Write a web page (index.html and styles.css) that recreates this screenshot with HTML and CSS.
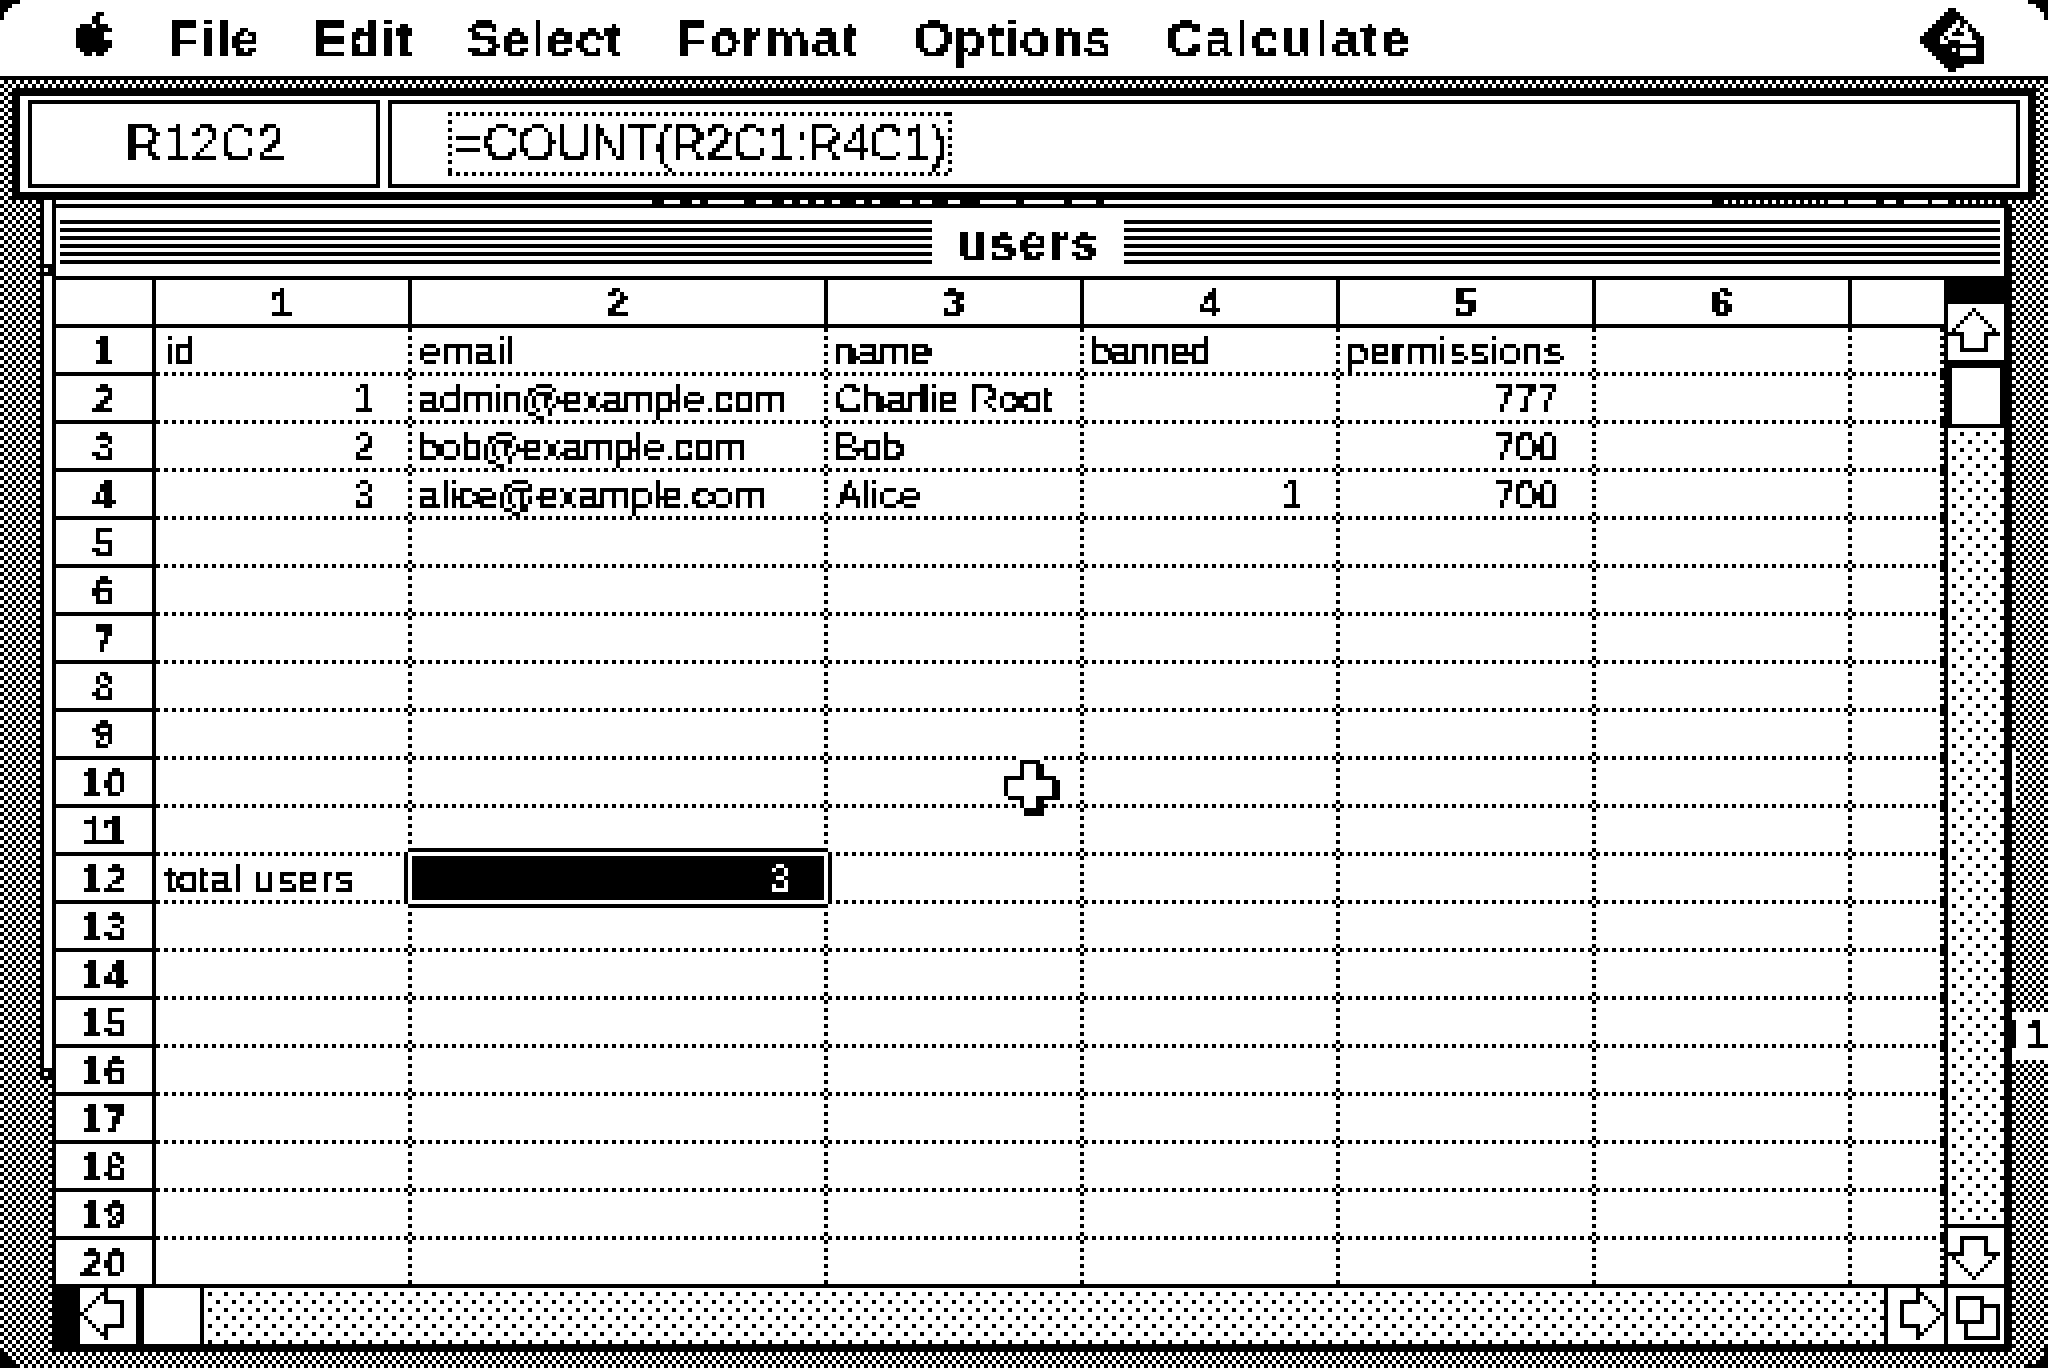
FILE: index.html
```html
<!DOCTYPE html>
<html lang="en">
<head>
<meta charset="utf-8">
<title>users</title>
<link rel="stylesheet" href="styles.css">
</head>
<body>
<svg class="defs" width="0" height="0" aria-hidden="true">
  <filter id="bitmap" x="0" y="0" width="100%" height="100%" color-interpolation-filters="sRGB">
    <feFlood x="1" y="1" width="1" height="1" flood-color="#000"/>
    <feComposite width="4" height="4"/>
    <feTile result="grid"/>
    <feComposite in="SourceGraphic" in2="grid" operator="in"/>
    <feMorphology operator="dilate" radius="1" result="a"/>
    <feOffset in="a" dx="1" dy="0" result="b"/>
    <feOffset in="a" dx="0" dy="1" result="c"/>
    <feOffset in="a" dx="1" dy="1" result="d"/>
    <feMerge result="m">
      <feMergeNode in="a"/><feMergeNode in="b"/><feMergeNode in="c"/><feMergeNode in="d"/>
    </feMerge>
    <feComponentTransfer in="m">
      <feFuncR type="discrete" tableValues="0 0 1"/>
      <feFuncG type="discrete" tableValues="0 0 1"/>
      <feFuncB type="discrete" tableValues="0 0 1"/>
    </feComponentTransfer>
  </filter>
</svg>

<div class="screen">
  <header class="menubar">
    <svg class="apple" viewBox="0 0 9 11" shape-rendering="crispEdges"><path d="M5 0h2v1h-2zM4 1h2v2h-2zM1 3h3v1h-3zM5 3h3v1h-3zM0 4h9v1h-9zM0 5h7v2h-7zM0 7h9v2h-9zM1 9h7v1h-7zM2 10h2v1h-2zM5 10h2v1h-2z"/></svg>
    <nav class="menus">
      <span>File</span><span>Edit</span><span>Select</span><span class="loose">Format</span><span>Options</span><span class="loose">Calculate</span>
    </nav>
    <svg class="appicon" viewBox="0 0 16 16" shape-rendering="crispEdges">
      <path d="M7 0h2v1h-2zM6 1h4v1h-4zM5 2h6v1h-6zM4 3h8v1h-8zM3 4h10v1h-10zM2 5h12v1h-12zM1 6h14v1h-14zM0 7h16v2h-16zM1 9h15v1h-15zM2 10h14v1h-14zM3 11h13v1h-13zM4 12h12v1h-12zM5 13h11v1h-11zM6 14h5v1h-5zM7 15h2v1h-2z"/>
      <path class="w" d="M9 3h1v1h-1zM8 4h2v1h-2zM11 4h1v1h-1zM7 5h2v1h-2zM10 5h2v1h-2zM6 6h2v1h-2zM11 6h2v1h-2zM5 7h1v1h-1zM7 7h6v1h-6zM5 8h2v1h-2zM10 8h4v1h-4zM8 10h1v1h-1zM10 10h4v2h-4z"/>
    </svg>
  </header>

  <main class="desktop">
    <div class="bg-left"><i class="tick tick-top"></i><i class="tick tick-bottom"></i></div>
    <div class="bg-right"></div>
    <div class="bg-label">1</div>

    <section class="formula">
      <div class="ref">R12C2</div>
      <div class="entry"><span class="edit">=COUNT(R2C1:R4C1)</span></div>
    </section>

    <div class="window-wrap">
      <svg class="strip" width="1952" height="4" shape-rendering="crispEdges">
        <path class="strip-solid" d="M4 2H600M612 2H628M640 2H648M656 2H692M704 2H720M732 2H740M748 2H756M764 2H772M780 2H788M804 2H812M820 2H828M848 2H860M868 2H880M896 2H908M928 2H964M972 2H1012M1020 2H1044M1052 2H1660M1776 2H1792M1796 2H1824M1832 2H1844M1852 2H1876M1880 2H1896"/>
        <path class="strip-dots" d="M1672 2H1772M1904 2H1952"/>
      </svg>
      <section class="window">
        <div class="titlebar"><h1>users</h1></div>
        <div class="sheet">
          <div class="grid">
            <div class="h"></div><div class="h">1</div><div class="h">2</div><div class="h">3</div><div class="h">4</div><div class="h">5</div><div class="h">6</div><div class="h"></div>

            <div class="r">1</div><div class="c">id</div><div class="c wide">email</div><div class="c">name</div><div class="c tighter">banned</div><div class="c wide">permissions</div><div class="c"></div><div class="c"></div>
            <div class="r">2</div><div class="c n">1</div><div class="c tight">admin@example.com</div><div class="c nudge">Charlie Root</div><div class="c"></div><div class="c n">777</div><div class="c"></div><div class="c"></div>
            <div class="r">3</div><div class="c n">2</div><div class="c tight">bob@example.com</div><div class="c">Bob</div><div class="c"></div><div class="c n">700</div><div class="c"></div><div class="c"></div>
            <div class="r">4</div><div class="c n">3</div><div class="c snug">alice@example.com</div><div class="c indent">Alice</div><div class="c n">1</div><div class="c n">700</div><div class="c"></div><div class="c"></div>
            <div class="r">5</div><div class="c"></div><div class="c"></div><div class="c"></div><div class="c"></div><div class="c"></div><div class="c"></div><div class="c"></div>
            <div class="r">6</div><div class="c"></div><div class="c"></div><div class="c"></div><div class="c"></div><div class="c"></div><div class="c"></div><div class="c"></div>
            <div class="r">7</div><div class="c"></div><div class="c"></div><div class="c"></div><div class="c"></div><div class="c"></div><div class="c"></div><div class="c"></div>
            <div class="r">8</div><div class="c"></div><div class="c"></div><div class="c"></div><div class="c"></div><div class="c"></div><div class="c"></div><div class="c"></div>
            <div class="r">9</div><div class="c"></div><div class="c"></div><div class="c"></div><div class="c"></div><div class="c"></div><div class="c"></div><div class="c"></div>
            <div class="r">10</div><div class="c"></div><div class="c"></div><div class="c"></div><div class="c"></div><div class="c"></div><div class="c"></div><div class="c"></div>
            <div class="r">11</div><div class="c"></div><div class="c"></div><div class="c"></div><div class="c"></div><div class="c"></div><div class="c"></div><div class="c"></div>
            <div class="r">12</div><div class="c wide">total users</div><div class="c active"><div class="sel">3</div></div><div class="c"></div><div class="c"></div><div class="c"></div><div class="c"></div><div class="c"></div>
            <div class="r">13</div><div class="c"></div><div class="c"></div><div class="c"></div><div class="c"></div><div class="c"></div><div class="c"></div><div class="c"></div>
            <div class="r">14</div><div class="c"></div><div class="c"></div><div class="c"></div><div class="c"></div><div class="c"></div><div class="c"></div><div class="c"></div>
            <div class="r">15</div><div class="c"></div><div class="c"></div><div class="c"></div><div class="c"></div><div class="c"></div><div class="c"></div><div class="c"></div>
            <div class="r">16</div><div class="c"></div><div class="c"></div><div class="c"></div><div class="c"></div><div class="c"></div><div class="c"></div><div class="c"></div>
            <div class="r">17</div><div class="c"></div><div class="c"></div><div class="c"></div><div class="c"></div><div class="c"></div><div class="c"></div><div class="c"></div>
            <div class="r">18</div><div class="c"></div><div class="c"></div><div class="c"></div><div class="c"></div><div class="c"></div><div class="c"></div><div class="c"></div>
            <div class="r">19</div><div class="c"></div><div class="c"></div><div class="c"></div><div class="c"></div><div class="c"></div><div class="c"></div><div class="c"></div>
            <div class="r">20</div><div class="c"></div><div class="c"></div><div class="c"></div><div class="c"></div><div class="c"></div><div class="c"></div><div class="c"></div>
          </div>

          <aside class="vscroll">
            <div class="sbtn"><svg viewBox="0 0 14 14" shape-rendering="crispEdges"><path d="M6 1h1v1h-1zM5 2h1v1h-1zM7 2h1v1h-1zM4 3h1v1h-1zM8 3h1v1h-1zM3 4h1v1h-1zM9 4h1v1h-1zM2 5h1v1h-1zM10 5h1v1h-1zM1 6h1v1h-1zM11 6h1v1h-1zM0 7h4v1h-4zM9 7h4v1h-4zM3 8h1v3h-1zM9 8h1v3h-1zM3 11h7v1h-7z"/></svg></div>
            <div class="vthumb"></div>
            <div class="track vtrack"></div>
            <div class="sbtn"><svg viewBox="0 0 14 14" shape-rendering="crispEdges"><path d="M3 2h7v1h-7zM3 3h1v3h-1zM9 3h1v3h-1zM0 6h4v1h-4zM9 6h4v1h-4zM1 7h1v1h-1zM11 7h1v1h-1zM2 8h1v1h-1zM10 8h1v1h-1zM3 9h1v1h-1zM9 9h1v1h-1zM4 10h1v1h-1zM8 10h1v1h-1zM5 11h1v1h-1zM7 11h1v1h-1zM6 12h1v1h-1z"/></svg></div>
          </aside>
        </div>

        <footer class="hscroll">
          <div class="sbtn"><svg viewBox="0 0 14 14" shape-rendering="crispEdges"><path d="M0 6h1v1h-1zM1 5h1v1h-1zM1 7h1v1h-1zM2 4h1v1h-1zM2 8h1v1h-1zM3 3h1v1h-1zM3 9h1v1h-1zM4 2h1v1h-1zM4 10h1v1h-1zM5 1h1v1h-1zM5 11h1v1h-1zM6 0h1v4h-1zM6 9h1v4h-1zM7 3h3v1h-3zM7 9h3v1h-3zM10 3h1v7h-1z"/></svg></div>
          <div class="hthumb"></div>
          <div class="track htrack"></div>
          <div class="sbtn"><svg viewBox="0 0 14 14" shape-rendering="crispEdges"><path d="M3 3h1v7h-1zM4 3h3v1h-3zM4 9h3v1h-3zM7 0h1v4h-1zM7 9h1v4h-1zM8 1h1v1h-1zM8 11h1v1h-1zM9 2h1v1h-1zM9 10h1v1h-1zM10 3h1v1h-1zM10 9h1v1h-1zM11 4h1v1h-1zM11 8h1v1h-1zM12 5h1v1h-1zM12 7h1v1h-1zM13 6h1v1h-1z"/></svg></div>
          <div class="sbtn grow"><svg viewBox="0 0 14 14" shape-rendering="crispEdges"><path d="M2 2h7v1h-7zM2 8h7v1h-7zM2 3h1v5h-1zM8 3h1v5h-1zM9 4h4v1h-4zM12 5h1v7h-1zM4 12h9v1h-9zM4 9h1v3h-1z"/></svg></div>
        </footer>
      </section>
    </div>
  </main>

  <svg class="cursor" viewBox="0 0 15 15" shape-rendering="crispEdges">
    <path class="w" d="M3 0h7v1h-7z"/>
    <path d="M4 1h5v12h-5zM0 5h13v5h-13zM5 2h5v13h-5zM1 6h13v5h-13z"/>
    <path class="w" d="M5 2h3v11h-3zM1 6h11v4h-11z"/>
  </svg>

  <i class="corner tl"></i><i class="corner tr"></i><i class="corner bl"></i><i class="corner br"></i>
</div>
</body>
</html>
```

FILE: styles.css
```css
* { box-sizing: border-box; }

html, body { margin: 0; padding: 0; background: #fff; }

.defs { position: absolute; }

.screen {
  position: relative;
  width: 2048px;
  height: 1368px;
  overflow: hidden;
  background: #fff;
  color: #000;
  font-family: "Liberation Sans", Arial, sans-serif;
  filter: url(#bitmap);
}

/* menu bar */
.menubar {
  display: flex;
  align-items: flex-start;
  height: 80px;
  padding: 0 64px 0 76px;
  border-bottom: 4px solid #000;
  background: #fff;
}
.apple { width: 36px; height: 44px; margin-top: 12px; flex: none; }
.menus {
  display: flex;
  gap: 53px;
  margin: 11px 0 0 56px;
  font-size: 50px;
  font-weight: 700;
  line-height: 56px;
  letter-spacing: 1.5px;
}
.loose { letter-spacing: 2.5px; }
.appicon { width: 64px; height: 64px; margin: 8px 0 0 auto; flex: none; }
.w { fill: #fff; }

/* desktop */
.desktop {
  position: relative;
  height: 1288px;
  padding-top: 8px;
  background: repeating-conic-gradient(#000 0 25%, #fff 0 50%) 0 0 / 8px 8px;
}
.bg-left {
  position: absolute;
  left: 40px;
  top: 120px;
  width: 12px;
  height: 880px;
  border-left: 4px solid #000;
  background: #fff;
}
.tick {
  position: absolute;
  left: -4px;
  width: 12px;
  height: 12px;
  border: 4px solid #000;
  background: #fff;
}
.tick-top { top: 64px; }
.tick-bottom { bottom: 0; }
.bg-right {
  position: absolute;
  left: 2012px;
  top: 672px;
  width: 4px;
  height: 52px;
  background: #fff;
}
.bg-label {
  position: absolute;
  left: 2012px;
  top: 932px;
  width: 36px;
  height: 48px;
  padding-left: 14px;
  background: #fff linear-gradient(#000 0 0) 0 8px / 4px 28px no-repeat;
  font-size: 39px;
  font-weight: 700;
  line-height: 44px;
}

/* formula bar */
.formula {
  display: flex;
  gap: 8px;
  height: 112px;
  margin: 0 12px;
  padding: 4px 8px;
  border: 8px solid #000;
  background: #fff;
  font-size: 50px;
  position: relative;
}
.ref, .entry { border: 4px solid #000; height: 88px; }
.ref {
  flex: none;
  width: 352px;
  text-align: center;
  line-height: 78px;
  letter-spacing: .8px;
  text-indent: 2px;
}
.entry { flex: 1; padding: 8px 0 0 56px; }
.edit {
  display: block;
  width: 504px;
  height: 64px;
  padding-left: 6px;
  line-height: 62px;
  letter-spacing: -1.1px;
  background:
    repeating-linear-gradient(90deg, #000 0 4px, transparent 0 8px) 0 0 / 100% 4px no-repeat,
    repeating-linear-gradient(90deg, #000 0 4px, transparent 0 8px) 0 100% / 100% 4px no-repeat,
    repeating-linear-gradient(#000 0 4px, transparent 0 8px) 0 0 / 4px 100% no-repeat,
    repeating-linear-gradient(#000 0 4px, transparent 0 8px) 100% 0 / 4px 100% no-repeat;
}

/* sheet window */
.window-wrap { position: relative; margin-left: 52px; width: 1960px; }
.strip { display: block; background: #000; }
.strip-solid, .strip-dots { fill: none; stroke: #fff; stroke-width: 4; }
.strip-dots { stroke-dasharray: 4 4; }

.window {
  height: 1148px;
  border: solid #000;
  border-width: 4px 8px 8px 4px;
  background: #fff;
}
.titlebar {
  display: flex;
  justify-content: center;
  height: 72px;
  margin: 0;
  padding: 12px 4px 12px;
  border-bottom: 4px solid #000;
  background: repeating-linear-gradient(#000 0 4px, #fff 0 8px) 4px 12px / calc(100% - 8px) 44px no-repeat;
}
.titlebar h1 {
  margin: 0 4px 0 0;
  width: 192px;
  height: 44px;
  background: #fff;
  text-align: center;
  font-size: 50px;
  font-weight: 700;
  line-height: 46px;
  letter-spacing: 2px;
}

.sheet { display: flex; height: 1004px; }
.grid {
  display: grid;
  grid-template-columns: 100px 256px 416px 256px 256px 256px 256px 92px;
  grid-auto-rows: 48px;
  width: 1888px;
  height: 1004px;
  overflow: hidden;
  font-size: 39px;
  line-height: 46px;
}
.h, .r {
  border: solid #000;
  border-width: 0 4px 4px 0;
  text-align: center;
  font-weight: 700;
  letter-spacing: 2px;
  -webkit-text-stroke: .2px #000;
}
.h:nth-child(8) { border-right: 0; }
.c {
  position: relative;
  padding-left: 6px;
  white-space: nowrap;
  -webkit-text-stroke: .6px #000;
  background:
    repeating-linear-gradient(90deg, #000 0 4px, transparent 0 8px) 0 100% / 100% 4px no-repeat,
    repeating-linear-gradient(#000 0 4px, transparent 0 8px) 100% 0 / 4px 100% no-repeat;
}
.r + .c { padding-left: 8px; }
.n { padding: 0 38px 0 0; text-align: right; }
.r + .n { padding: 0 38px 0 0; }
.indent { padding-left: 8px; }
.tight { letter-spacing: -.6px; }
.snug { letter-spacing: -.3px; }
.tighter { letter-spacing: -1.8px; }
.wide { letter-spacing: .9px; }
.nudge { letter-spacing: .15px; }
.sel {
  position: absolute;
  left: -8px;
  top: -8px;
  width: 428px;
  height: 60px;
  padding: 8px 42px 0 0;
  text-align: right;
  color: #fff;
  -webkit-text-stroke: .6px #fff;
  background:
    linear-gradient(#000 0 0) 8px 8px / 412px 44px no-repeat,
    linear-gradient(#fff 0 0) 4px 4px / 420px 52px no-repeat,
    linear-gradient(#000 0 0) 8px 0 / 412px 4px no-repeat,
    linear-gradient(#000 0 0) 8px 56px / 412px 4px no-repeat,
    linear-gradient(#000 0 0) 0 8px / 4px 44px no-repeat,
    linear-gradient(#000 0 0) 424px 8px / 4px 44px no-repeat;
}

/* scrollbars */
.sbtn { width: 56px; height: 56px; flex: none; background: #fff; }
.sbtn svg { display: block; width: 56px; height: 56px; }
.track {
  background-color: #fff;
  background-image:
    conic-gradient(at 4px 4px, transparent 75%, #000 0),
    conic-gradient(at 4px 4px, transparent 75%, #000 0);
  background-size: 16px 16px;
}
.vscroll {
  display: flex;
  flex-direction: column;
  width: 60px;
  padding-top: 24px;
  border-left: 4px solid #000;
  background: #000;
}
.vthumb {
  flex: none;
  height: 64px;
  border: solid #000;
  border-width: 8px 4px 0;
  background: #fff;
}
.vtrack { flex: 1; margin-top: 4px; margin-bottom: 4px; background-position: 12px 4px, 4px 12px; }
.hscroll {
  display: flex;
  height: 60px;
  padding-left: 24px;
  border-top: 4px solid #000;
  background: #000;
}
.hthumb {
  flex: none;
  width: 56px;
  margin-left: 8px;
  background: #fff;
}
.htrack { flex: 1; margin: 0 4px; background-position: 4px 4px, 12px 12px; }
.grow { margin-left: 4px; }

/* mouse pointer */
.cursor {
  position: absolute;
  left: 1004px;
  top: 756px;
  width: 60px;
  height: 60px;
  z-index: 3;
}

/* rounded screen corners */
.corner {
  position: absolute;
  width: 20px;
  height: 20px;
  background: #000;
  clip-path: polygon(0 0, 100% 0, 100% 20%, 60% 20%, 60% 40%, 40% 40%, 40% 60%, 20% 60%, 20% 100%, 0 100%);
  z-index: 4;
}
.tl { left: 0; top: 0; }
.tr { right: 0; top: 0; transform: scaleX(-1); }
.bl { left: 0; bottom: 0; transform: scaleY(-1); }
.br { right: 0; bottom: 0; transform: scale(-1); }
```
